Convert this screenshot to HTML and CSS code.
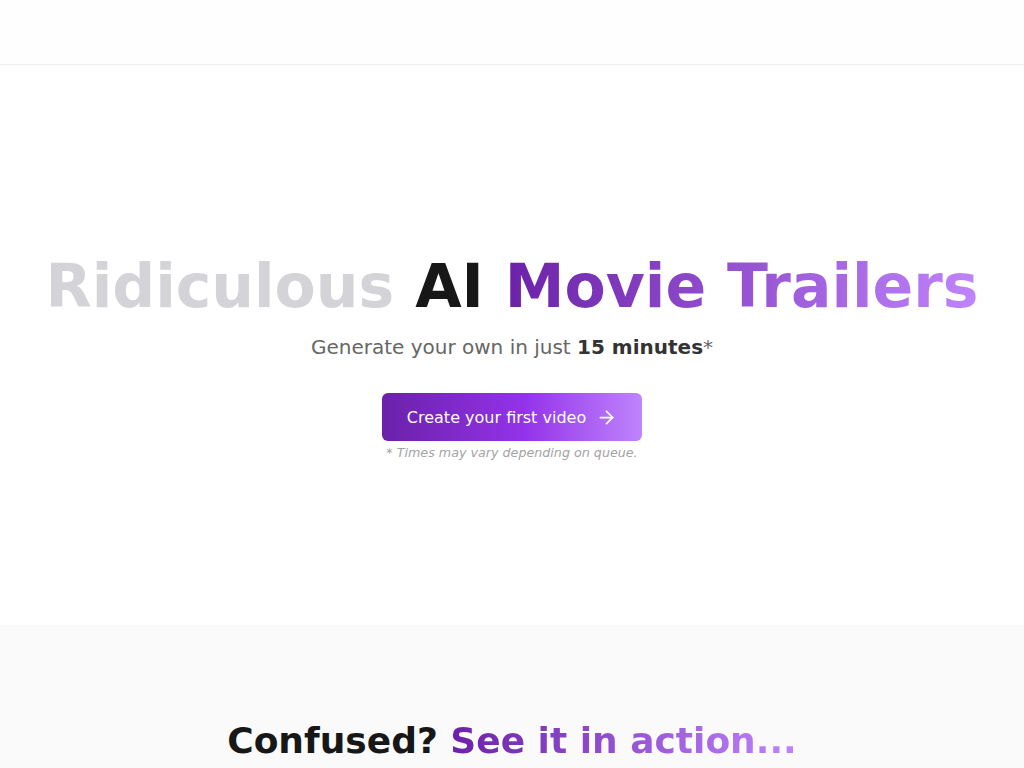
FILE: index.html
```html
<!DOCTYPE html>
<html lang="en">
<head>
<meta charset="utf-8">
<title>Ridiculous AI Movie Trailers</title>
<link rel="stylesheet" href="styles.css">
</head>
<body>
<header class="topbar"></header>
<main>
  <section class="hero">
    <h1 class="hero-title"><span class="muted">Ridiculous</span> <span class="dark">AI</span> <span class="grad">Movie Trailers</span></h1>
    <p class="hero-sub">Generate your own in just <strong>15 minutes</strong>*</p>
    <a class="cta" href="#">Create your first video
      <svg class="cta-icon" viewBox="0 0 24 24" width="21" height="21" fill="none" stroke="currentColor" stroke-width="2" stroke-linecap="round" stroke-linejoin="round"><path d="M5 12h14"/><path d="M12 5l7 7-7 7"/></svg>
    </a>
    <p class="note">* Times may vary depending on queue.</p>
  </section>
  <section class="demo">
    <h2 class="demo-title">Confused? <span class="grad">See it in action...</span></h2>
  </section>
</main>
</body>
</html>
```

FILE: styles.css
```css
* { box-sizing: border-box; }
html, body { margin: 0; padding: 0; }
body {
  font-family: "DejaVu Sans", sans-serif;
  background: #fff;
  color: #171717;
}
.topbar {
  height: 65px;
  background: #fefefe;
  border-bottom: 1px solid #f0f0f0;
  box-shadow: 0 1px 3px rgba(0,0,0,0.04);
}
.hero {
  height: 560px;
  display: flex;
  flex-direction: column;
  align-items: center;
  justify-content: flex-start;
  padding-top: 191px;
}
.hero-title {
  margin: 0;
  font-size: 60px;
  font-weight: 700;
  line-height: 1;
  letter-spacing: 0;
  white-space: nowrap;
}
.muted { color: #d4d4d8; }
.dark { color: #171717; }
.grad {
  background: linear-gradient(90deg, #6b21a8 0%, #c084fc 100%);
  -webkit-background-clip: text;
  background-clip: text;
  color: transparent;
}
.hero-sub {
  margin: 17px 0 0;
  font-size: 20px;
  color: #666;
  line-height: 28px;
}
.hero-sub strong { color: #333; font-weight: 700; }
.cta {
  margin-top: 32px;
  width: 260px;
  height: 48px;
  display: flex;
  align-items: center;
  justify-content: center;
  gap: 10px;
  border-radius: 6px;
  background: linear-gradient(90deg, #6b21a8 0%, #9333ea 55%, #c084fc 100%);
  color: #fff;
  text-decoration: none;
  font-size: 16px;
}
.cta-icon { display: block; }
.note {
  margin: 3px 0 0;
  font-size: 12.7px;
  font-style: italic;
  color: #a3a3a3;
  line-height: 18px;
}
.demo {
  background: #fafafa;
  height: 200px;
  padding-top: 92px;
  text-align: center;
}
.demo-title {
  margin: 0;
  font-size: 36px;
  font-weight: 700;
  line-height: 48px;
  color: #171717;
}
```
